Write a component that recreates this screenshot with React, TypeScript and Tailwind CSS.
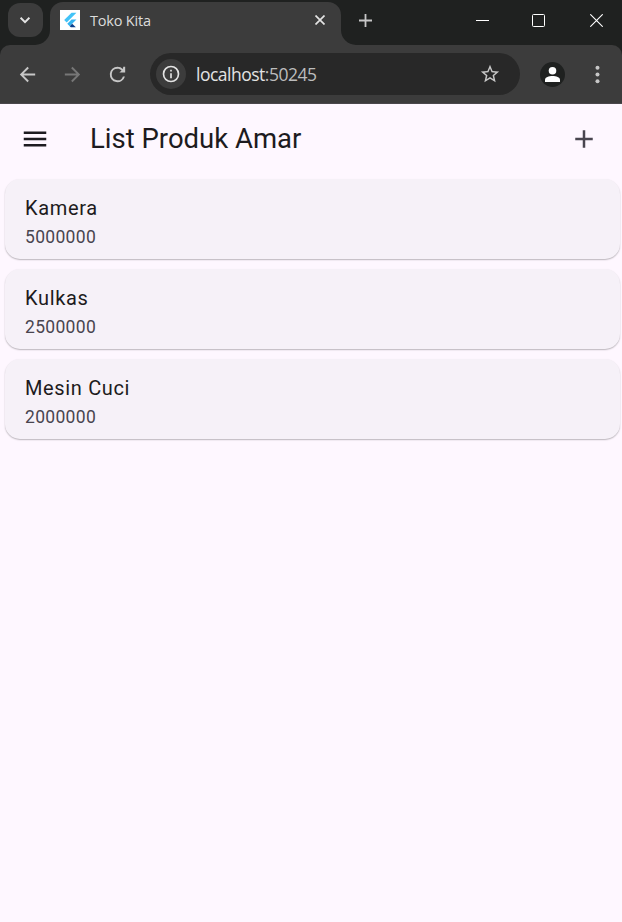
import type { ReactNode } from "react";

type Product = { name: string; price: string };

const products: Product[] = [
  { name: "Kamera", price: "5000000" },
  { name: "Kulkas", price: "2500000" },
  { name: "Mesin Cuci", price: "2000000" },
];

function Icon({ className, box = "0 0 24 24", children }: { className: string; box?: string; children: ReactNode }) {
  return (
    <svg viewBox={box} className={`block shrink-0 ${className}`} fill="currentColor" aria-hidden="true">
      {children}
    </svg>
  );
}

function FlutterLogo() {
  return (
    <span className="block size-5 shrink-0 bg-white p-[2px]">
      <Icon className="size-4">
        <path fill="#42c3f7" d="M14.3 1 3.3 12 7 15.7 21.7 1z" />
        <path fill="#35b4f1" d="M14.3 11.1 7.9 17.5l3.7 3.7 3.7-3.7 6.4-6.4z" />
        <path fill="#0b3f8c" d="m11.6 21.2 1.7 1.8h7.4l-5.4-5.5z" />
      </Icon>
    </span>
  );
}

function TabStrip() {
  return (
    <div className="flex h-[45px] bg-[#3c3c3c]">
      <div className="h-[45px] w-[50px] shrink-0 rounded-br-[15px] bg-[#1f2120] pl-2 pt-[3px]">
        <button className="flex h-[34px] w-[35px] items-center justify-center rounded-[12px] bg-[#3c3c3c] pr-px text-[#e3e3e3]">
          <Icon className="size-[10px]" box="0 0 10 10">
            <path d="m.6 2.7 4.4 4.4 4.4-4.4" fill="none" stroke="currentColor" strokeWidth="2" />
          </Icon>
        </button>
      </div>
      <div className="h-[45px] w-[291px] shrink-0 bg-[linear-gradient(#1f2120_50%,#3c3c3c_50%)] pt-[2px]">
        <div className="flex h-[43px] rounded-t-[13px] bg-[#3c3c3c] pl-[10px] pr-4 pt-2">
          <FlutterLogo />
          <span className="ml-[10px] h-5 flex-1 font-['Open_Sans','Noto_Sans',sans-serif] text-[14.5px] leading-[21px] tracking-[-0.2px] text-[#dcdcdc]">
            Toko Kita
          </span>
          <Icon className="mt-[5px] size-[10px] text-[#e3e3e3]" box="0 0 10 10">
            <path d="m.5.5 9 9m0-9-9 9" stroke="currentColor" strokeWidth="1.7" />
          </Icon>
        </div>
      </div>
      <div className="flex h-[45px] flex-1 rounded-bl-[15px] bg-[#1f2120] pl-[18px] pr-[19px] pt-[14px]">
        <Icon className="size-[13px] text-[#c7c7c7]" box="0 0 13 13">
          <path d="M6.5 0v13M0 6.5h13" stroke="currentColor" strokeWidth="1.8" />
        </Icon>
        <div className="ml-auto flex gap-[43px] text-white">
          <Icon className="size-[13px]" box="0 0 13 13">
            <path d="M0 6h13v1H0z" />
          </Icon>
          <Icon className="size-[13px]" box="0 0 13 13">
            <rect x=".5" y=".5" width="12" height="12" rx="1" fill="none" stroke="currentColor" />
          </Icon>
          <Icon className="ml-[2px] size-[13px]" box="0 0 13 13">
            <path d="m.3.3 12.4 12.4m0-12.4L.3 12.7" stroke="currentColor" strokeWidth="1.1" />
          </Icon>
        </div>
      </div>
    </div>
  );
}

function Toolbar() {
  return (
    <div className="bg-[#1f2120]">
      <div className="flex h-[59px] items-center rounded-t-[10px] border-b border-[#4a474b] bg-[#3c3c3c] pl-4">
        <Icon className="size-[23px] text-[#c7c7c7]">
          <path d="M20 11H7.83l5.59-5.59L12 4l-8 8 8 8 1.41-1.41L7.83 13H20z" />
        </Icon>
        <Icon className="ml-[22px] size-[23px] text-[#777777]">
          <path d="m12 4-1.41 1.41L16.17 11H4v2h12.17l-5.58 5.59L12 20l8-8z" />
        </Icon>
        <Icon className="ml-[22px] size-[23px] text-[#c7c7c7]">
          <path d="M17.65 6.35A7.96 7.96 0 0 0 12 4a8 8 0 1 0 7.73 10h-2.08A6 6 0 1 1 12 6c1.66 0 3.14.69 4.22 1.78L14 10h6V4h-2z" />
        </Icon>
        <div className="ml-[21px] flex h-[42px] w-[370px] items-center rounded-full bg-[#282828] pl-[6px] pr-[19px]">
          <span className="flex size-[30px] items-center justify-center rounded-full bg-[#3c3c3c] text-[#e3e3e3]">
            <Icon className="size-5">
              <path d="M11 7h2v2h-2zm0 4h2v6h-2zm1-9a10 10 0 1 0 0 20 10 10 0 0 0 0-20m0 18a8 8 0 1 1 0-16 8 8 0 0 1 0 16" />
            </Icon>
          </span>
          <span className="ml-[10px] flex-1 font-['Open_Sans','Noto_Sans',sans-serif] text-[17.5px] leading-6 tracking-[-0.5px] text-[#bcbcbc]">
            <span className="text-[#e3e3e3]">localhost</span>:50245
          </span>
          <Icon className="size-[22px] text-[#c7c7c7]">
            <path d="m22 9.24-7.19-.62L12 2 9.19 8.63 2 9.24l5.46 4.73L5.82 21 12 17.27 18.18 21l-1.63-7.03zM12 15.4l-3.76 2.27 1-4.28-3.32-2.88 4.38-.38L12 6.1l1.71 4.04 4.38.38-3.32 2.88 1 4.28z" />
          </Icon>
        </div>
        <span className="ml-5 flex size-[25px] items-center justify-center rounded-full bg-[#1f2120] text-white">
          <Icon className="size-[15px]" box="0 0 15 15">
            <circle cx="7.5" cy="3.8" r="3.8" />
            <path d="M0 15v-2.2C0 10.2 3.8 9 7.5 9s7.5 1.2 7.5 3.8V15z" />
          </Icon>
        </span>
        <Icon className="ml-[21px] size-[23px] text-[#c7c7c7]">
          <circle cx="12" cy="5" r="2.1" />
          <circle cx="12" cy="12" r="2.1" />
          <circle cx="12" cy="19" r="2.1" />
        </Icon>
      </div>
    </div>
  );
}

function AppBar() {
  return (
    <header className="flex h-[70px] items-center pl-5 pr-[23px]">
      <Icon className="size-[30px] text-[#1d1b20]">
        <path d="M3 18h18v-2H3zm0-5h18v-2H3zm0-7v2h18V6z" />
      </Icon>
      <h1 className="ml-10 flex-1 pb-[2px] text-[27.5px] leading-[35px] text-[#1d1b20]">List Produk Amar</h1>
      <Icon className="size-[30px] text-[#49454f]">
        <path d="M19 13h-6v6h-2v-6H5v-2h6V5h2v6h6z" />
      </Icon>
    </header>
  );
}

function ProductCard({ name, price }: Product) {
  return (
    <li className="h-20 rounded-[15px] bg-[#f6f1f8] pl-5 pt-[14px] shadow-[0_1px_1.5px_rgba(0,0,0,0.27)]">
      <p className="text-[20px] leading-[30px] tracking-[0.65px] text-[#1d1b20]">{name}</p>
      <p className="text-[17.5px] leading-[29px] tracking-[0.3125px] text-[#49454f]">{price}</p>
    </li>
  );
}

export default function App() {
  return (
    <div className="flex h-screen flex-col overflow-hidden bg-[#fef7ff] font-[Roboto,sans-serif]">
      <TabStrip />
      <Toolbar />
      <AppBar />
      <ul className="flex flex-col gap-[10px] pl-[5px] pr-[2px] pt-[5px]">
        {products.map((p) => (
          <ProductCard key={p.name} {...p} />
        ))}
      </ul>
    </div>
  );
}
